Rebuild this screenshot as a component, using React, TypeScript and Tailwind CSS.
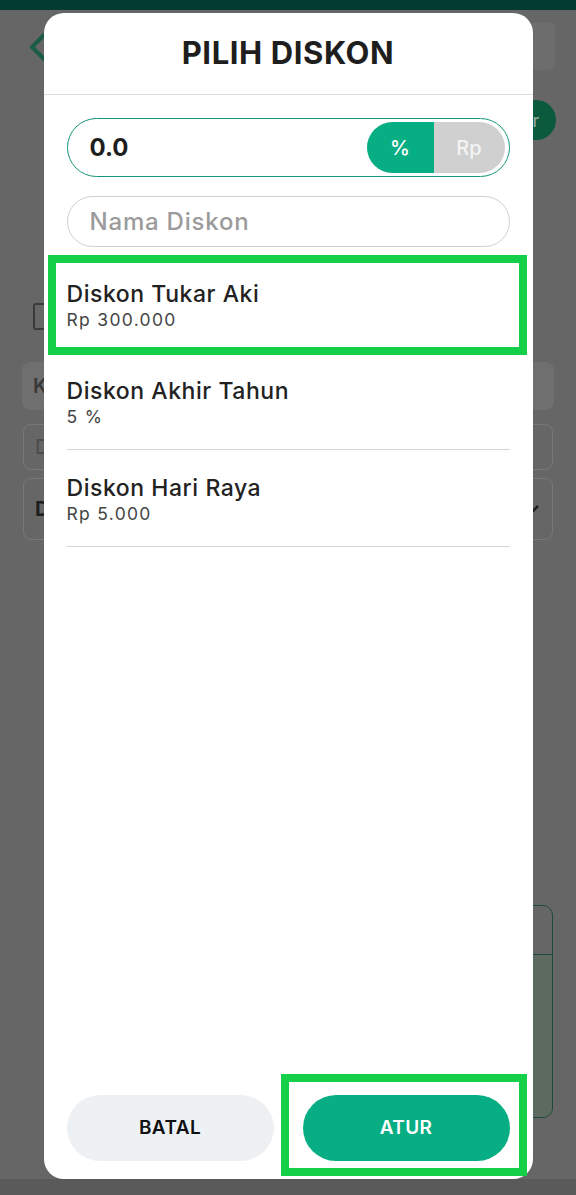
import React from "react";

const font = { fontFamily: 'Inter, "Noto Sans", sans-serif' };

function Background() {
  return (
    <div className="flex flex-col h-full">
      <div className="h-[10px] bg-[#033b31]" />
      <div className="flex items-start justify-between pl-[28px] pr-[21px] pt-[12px] h-[70px]">
        <svg width="20" height="30" viewBox="0 0 20 30" className="mt-[10px]">
          <path d="M16 3 L4 15 L16 27" fill="none" stroke="#1b5c47" strokeWidth="4" strokeLinecap="round" strokeLinejoin="round" />
        </svg>
        <div className="w-[26px] h-[48px] rounded-[6px] bg-[#6d6d6d]" />
      </div>
      <div className="flex justify-end pr-[20px] pt-[20px] h-[60px]">
        <div className="w-[40px] h-[40px] rounded-full bg-[#0b5a3e] flex items-center justify-center text-[#9aa89f] text-[18px]">r</div>
      </div>
      <div className="h-[163px]" />
      <div className="pl-[33px] h-[59px]">
        <div className="w-[24px] h-[27px] rounded-[3px] border-[2.5px] border-[#3a3a3a]" />
      </div>
      <div className="mx-[22px] h-[48px] rounded-[8px] bg-[#6f6f6f] flex items-center pl-[11px] text-[#383838] text-[20px] font-semibold">K</div>
      <div className="mx-[23px] mt-[14px] h-[46px] rounded-[8px] border border-[#787878] flex items-center pl-[11px] text-[#4a4a4a] text-[20px]">D</div>
      <div className="mx-[23px] mt-[8px] h-[62px] rounded-[8px] border border-[#787878] flex items-center justify-between pl-[11px] pr-[12px] text-[#1e1e1e] text-[20px] font-bold">
        <span>D</span>
        <svg width="16" height="10" viewBox="0 0 16 10"><path d="M2 2 L8 8 L14 2" fill="none" stroke="#1e1e1e" strokeWidth="2.5" /></svg>
      </div>
      <div className="h-[365px]" />
      <div className="ml-auto mr-[23px] w-[220px] h-[213px] rounded-[10px] border-[1.5px] border-[#1d4a3b] flex flex-col overflow-hidden">
        <div className="h-[49px] border-b-[1.5px] border-[#1d4a3b]" />
        <div className="flex-1 bg-[#5c6a5f]" />
      </div>
      <div className="flex-1" />
      <div className="h-[16px] bg-[#5a5a5a]" />
    </div>
  );
}

function Item({ title, sub, highlight }: { title: string; sub: string; highlight?: boolean }) {
  return (
    <div className="relative h-[97px] pt-[24px] border-b-[1.5px] border-[#d6d6d6]">
      <div className="text-[23px] leading-[29px] tracking-[0.55px] text-[#222222] font-medium">{title}</div>
      <div className="text-[17.5px] leading-[22px] tracking-[1.3px] text-[#454545]">{sub}</div>
      {highlight && (
        <div className="absolute left-[-19px] right-[-17px] top-[-1px] bottom-[-3px] border-[8px] border-[#14cf48]" />
      )}
    </div>
  );
}

export default function App() {
  return (
    <div className="relative w-[576px] h-[1195px] overflow-hidden bg-[#666666]" style={font}>
      <Background />
      <div className="absolute inset-0 flex flex-col items-center pt-[13px] pb-[16px]">
        <div className="w-[489px] flex-1 bg-white rounded-[20px] flex flex-col">
          <div className="h-[82px] flex items-center justify-center border-b-[1.5px] border-[#dcdcdc] pb-[1px]">
            <h1 className="text-[31px] font-bold text-[#1e1e1e] tracking-[0.6px]">PILIH DISKON</h1>
          </div>
          <div className="px-[23px] pt-[23px] flex flex-col">
            <div className="h-[59px] rounded-full border-[1.5px] border-[#13977a] flex items-center justify-between pl-[22px] pr-[4px]">
              <span className="text-[24px] font-bold text-[#1e1e1e]">0.0</span>
              <div className="flex h-[51px] rounded-full overflow-hidden">
                <div className="w-[67px] bg-[#07ad83] flex items-center justify-center text-white text-[20px] font-medium">%</div>
                <div className="w-[71px] bg-[#d0d0d0] flex items-center justify-center text-[#f4f4f4] text-[20px] font-medium">Rp</div>
              </div>
            </div>
            <div className="mt-[19px] h-[51px] rounded-full border-[1.5px] border-[#d0d0d0] flex items-center pl-[22px]">
              <span className="text-[24px] tracking-[0.8px] text-[#9b9b9b] font-medium">Nama Diskon</span>
            </div>
            <div className="mt-[9px] flex flex-col">
              <Item title="Diskon Tukar Aki" sub="Rp 300.000" highlight />
              <Item title="Diskon Akhir Tahun" sub="5 %" />
              <Item title="Diskon Hari Raya" sub="Rp 5.000" />
            </div>
          </div>
          <div className="flex-1" />
          <div className="px-[23px] pb-[18px] flex gap-[29px]">
            <button className="flex-1 h-[66px] rounded-full bg-[#eef1f4] text-[19px] tracking-[0.4px] font-semibold text-[#111111]">BATAL</button>
            <div className="relative flex-1">
              <button className="w-full h-[66px] rounded-full bg-[#07ad83] text-[19px] tracking-[0.4px] font-semibold text-white">ATUR</button>
              <div className="absolute left-[-22px] right-[-17px] top-[-21px] bottom-[-15px] border-[8px] border-[#14cf48]" />
            </div>
          </div>
        </div>
      </div>
    </div>
  );
}
